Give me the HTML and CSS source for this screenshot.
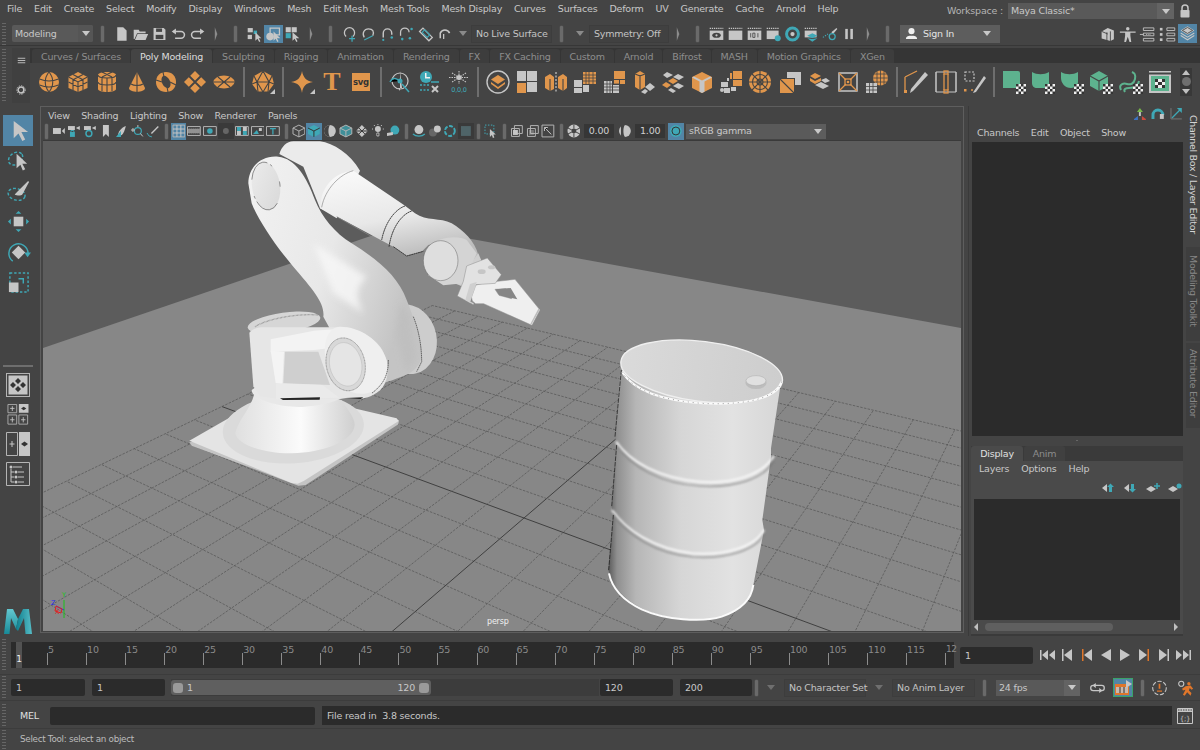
FILE: index.html
```html
<!DOCTYPE html>
<html lang="en">
<head>
<meta charset="utf-8">
<title>Maya</title>
<link rel="stylesheet" href="styles.css">
</head>
<body>
<div class="app">

<header class="menubar">
  <nav class="menus">
    <span>File</span><span>Edit</span><span>Create</span><span>Select</span><span>Modify</span><span>Display</span><span>Windows</span><span>Mesh</span><span>Edit Mesh</span><span>Mesh Tools</span><span>Mesh Display</span><span>Curves</span><span>Surfaces</span><span>Deform</span><span>UV</span><span>Generate</span><span>Cache</span><span>Arnold</span><span>Help</span>
  </nav>
  <div class="workspace">
    <span class="ws-label">Workspace :</span>
    <div class="ws-drop"><span>Maya Classic*</span><b class="caret-box"><i class="caret"></i></b></div>
    <svg class="lock" viewBox="0 0 12 14"><path class="sl" d="M3 6V4a3 3 0 0 1 6 0v2" fill="none" stroke-width="1.5"/><rect class="l" x="1.5" y="6" width="9" height="7.5" rx=".8"/></svg>
  </div>
</header>

<div class="statusline">
  <div class="grip"></div>
  <div class="mode-drop"><span>Modeling</span><b class="caret-box"><i class="caret"></i></b></div>
  <i class="hs"></i>
  <svg class="s" viewBox="0 0 20 20"><path class="l" d="M5 2h7l4 4v12H5z"/></svg>
  <svg class="s" viewBox="0 0 20 20"><path class="l" d="M2 5h6l1 2h7v2H6L3 16H2zM6.500 10H19l-3 7H3.500z"/></svg>
  <svg class="s" viewBox="0 0 20 20"><path class="l" d="M3 3h12l2 2v12H3z"/><rect class="d" x="6" y="3.500" width="7" height="4"/><rect class="d" x="5.500" y="11" width="9" height="5"/></svg>
  <svg class="s" viewBox="0 0 20 20"><path class="sl" fill="none" stroke-width="1.800" d="M4 7h9a4 4 0 0 1 0 8H6"/><path class="l" d="M7 3.500v7L2 7z"/></svg>
  <svg class="s" viewBox="0 0 20 20"><path class="sl" fill="none" stroke-width="1.800" d="M16 7H7a4 4 0 0 0 0 8h7"/><path class="l" d="M13 3.500v7L18 7z"/></svg>
  <svg class="s" viewBox="0 0 20 20"><path class="cl" d="M8 2l3 8-3 8z"/></svg>
  <i class="hs"></i>
  <svg class="s" viewBox="0 0 20 20"><rect class="l" x="2" y="3" width="6" height="5"/><rect class="l" x="2" y="11" width="5" height="5"/><rect class="t" x="9" y="6" width="4" height="4"/><path class="l" d="M11 8v10l2.500-2.500 2 4 1.500-1-2-3.500H18z"/></svg>
  <b class="sel-box"><svg class="s" viewBox="0 0 20 20"><path class="sl" fill="none" stroke-width="1.500" d="M6 9V3h11v8h-5"/><circle class="l" cx="6" cy="13" r="4.500"/><path class="l" d="M10 7v11l2.500-2.500 2 4 1.500-1-2-3.500H18z"/></svg></b>
  <svg class="s" viewBox="0 0 20 20"><rect class="l" x="2" y="2" width="6" height="6"/><rect class="l" x="9" y="2" width="6" height="6"/><rect class="t" x="2" y="9" width="6" height="6"/><path class="l" d="M10 8v10l2.500-2.500 2 4 1.500-1-2-3.500H18z"/></svg>
  <svg class="s" viewBox="0 0 20 20"><path class="cl" d="M8 2l3 8-3 8z"/></svg>
  <i class="hs"></i>
  <svg class="s" viewBox="0 0 20 20"><path class="sl" fill="none" stroke-width="1.500" d="M6 13a6 6 0 1 1 8 0"/><path class="st" stroke-width="1.500" d="M13 12v7M9.500 15.500h7"/></svg>
  <svg class="s" viewBox="0 0 20 20"><path class="sl" fill="none" stroke-width="1.500" d="M5 14c-3-5 0-10 5-10s7 3 5 8"/><path class="st" fill="none" stroke-width="1.300" d="M5 17l10-5"/></svg>
  <svg class="s" viewBox="0 0 20 20"><path class="sl" fill="none" stroke-width="1.700" d="M5 14V9a5 5 0 0 1 10 0v2"/><circle class="t" cx="15" cy="14" r="1.500"/><circle class="t" cx="5" cy="17" r="1.300"/></svg>
  <svg class="s" viewBox="0 0 20 20"><path class="sl" fill="none" stroke-width="1.500" d="M3 12V8a5 5 0 0 1 10 0"/><circle class="t" cx="16" cy="4" r="1.500"/><circle class="t" cx="5" cy="16" r="1.500"/><circle class="t" cx="14" cy="15" r="1.500"/></svg>
  <svg class="s" viewBox="0 0 20 20"><path class="sl" fill="none" stroke-width="1.500" d="M3 7l4-4 11 11-4 4z"/><path class="st" fill="none" stroke-width="1.300" d="M6 8l3-3 6 6-3 3z"/></svg>
  <svg class="s" viewBox="0 0 20 20"><path class="sl" fill="none" stroke-width="1.800" d="M5 15V9a6 6 0 0 1 11 0"/><path class="sl" fill="none" stroke-width="1.500" d="M9 16V10"/></svg>
  <span class="arrow-slot"><i class="caret dim"></i></span>
  <div class="field-flat w81">No Live Surface</div>
  <i class="hs"></i>
  <span class="arrow-slot a18"><i class="caret dim"></i></span>
  <div class="field-flat w80">Symmetry: Off</div>
  <svg class="s" viewBox="0 0 20 20"><path class="cl" d="M8 2l3 8-3 8z"/></svg>
  <i class="hs"></i>
  <svg class="s" viewBox="0 0 20 20"><rect class="l" x="2" y="6" width="16" height="11"/><path class="sl" stroke-width="1.500" stroke-dasharray="1.500 1" d="M2 3.500h16"/><ellipse class="d" cx="10" cy="11.500" rx="5" ry="3"/><circle class="l" cx="10" cy="11.500" r="1.300"/></svg>
  <svg class="s" viewBox="0 0 20 20"><rect class="l" x="2" y="6" width="16" height="11"/><path class="sl" stroke-width="1.500" stroke-dasharray="1.500 1" d="M2 3.500h16"/></svg>
  <svg class="s" viewBox="0 0 20 20"><rect class="l" x="2" y="6" width="16" height="11"/><path class="sl" stroke-width="1.500" stroke-dasharray="1.500 1" d="M2 3.500h16"/><path class="sd" d="M5.500 9v5M8 9v5h2.500V9zM14 9v5"/></svg>
  <svg class="s" viewBox="0 0 20 20"><rect class="l" x="2" y="6" width="14" height="10"/><path class="sl" stroke-width="1.500" stroke-dasharray="1.500 1" d="M2 3.500h14"/><circle class="t" cx="15" cy="15" r="3.500"/></svg>
  <svg class="s" viewBox="0 0 20 20"><circle class="st" fill="none" stroke-width="3.500" cx="10" cy="10" r="7"/><circle class="l" cx="10" cy="10" r="2.500"/></svg>
  <svg class="s" viewBox="0 0 20 20"><rect class="l" x="2" y="6" width="14" height="8"/><path class="sl" stroke-width="1.500" stroke-dasharray="1.500 1" d="M2 3.500h14"/><path class="t" d="M5 12l6-3 6 3-6 3z"/><path class="t" d="M5 15l6 1 6-1-6 4z"/></svg>
  <svg class="s" viewBox="0 0 20 20"><path class="l" d="M11 8l6-5 1 1-5 6z"/><circle class="st" fill="none" stroke-width="1.500" cx="12" cy="13" r="3.500"/><path class="st" stroke-width="1.300" stroke-dasharray="1.500 1.500" d="M1 14l6-4"/></svg>
  <svg class="s" viewBox="0 0 20 20"><rect class="l" x="5" y="4" width="3" height="12"/><rect class="l" x="11" y="4" width="3" height="12"/></svg>
  <svg class="s" viewBox="0 0 20 20"><path class="cl" d="M8 2l3 8-3 8z"/></svg>
  <i class="hs"></i>
  <div class="signin">
    <svg class="sign-ic" viewBox="0 0 14 14"><circle class="w" cx="7" cy="4.500" r="3.300"/><path class="w" d="M1 13c0-3 3-3.500 6-3.500s6 .5 6 3.500z"/></svg>
    <span>Sign In</span><i class="caret"></i>
  </div>
  <div class="sl-right">
    <svg class="s w19" viewBox="0 0 20 20"><path class="l" d="M3 7l7-4 7 3v10l-4 2-3-1-7-2z"/><path class="sd" d="M9 8v10M13 7v11M3 7l7 3"/></svg>
    <svg class="s w19" viewBox="0 0 20 20"><circle class="l" cx="10" cy="4" r="2"/><path class="l" d="M1 7h18v1.500h-6V12l1 7h-2l-2-6-2 6H6l1-7V8.500H1z"/></svg>
    <svg class="s w19" viewBox="0 0 20 20"><path class="sl" fill="none" d="M5 3h12v3H5zM5 9h12v3H5zM5 15h12v3H5zM1 10.500h4"/><path class="sl" stroke-dasharray="1 1" d="M8 10.500h6"/></svg>
    <svg class="s w19" viewBox="0 0 20 20"><path class="sl" fill="none" d="M9 3h9v3H9zM9 9h9v3H9zM9 15h9v3H9z"/><rect class="l" x="1" y="3" width="3" height="3"/><rect class="l" x="1" y="9" width="3" height="3"/><rect class="l" x="1" y="15" width="3" height="3"/></svg>
    <b class="sel-box tall"><svg class="s" viewBox="0 0 20 20"><path class="l" d="M10 2l8 5-8 5-8-5z"/><path class="sd" d="M10 3.500L16 7l-6 3.500L4 7z"/><path class="sl" fill="none" stroke-width="1.200" d="M2 10l8 5 8-5M2 13l8 5 8-5"/></svg></b>
  </div>
</div>

<section class="shelf-wrap">
  <div class="grip"></div>
  <div class="shelf">
    <div class="shelf-side">
      <svg class="side-ic" viewBox="0 0 12 12"><path class="sl" stroke-width="1.200" d="M1 3h10M1 6h10M1 9h10"/></svg>
      <svg class="side-ic" viewBox="0 0 12 12"><circle class="sl" fill="none" stroke-width="1.800" cx="6" cy="6" r="3.500"/><circle class="sl" fill="none" stroke-width="1" stroke-dasharray="1.500 1.500" cx="6" cy="6" r="5.200"/></svg>
    </div>
    <div class="shelf-main">
      <div class="tabs">
        <span class="tab">Curves / Surfaces</span><span class="tab on">Poly Modeling</span><span class="tab">Sculpting</span><span class="tab">Rigging</span><span class="tab">Animation</span><span class="tab">Rendering</span><span class="tab">FX</span><span class="tab">FX Caching</span><span class="tab">Custom</span><span class="tab">Arnold</span><span class="tab">Bifrost</span><span class="tab">MASH</span><span class="tab">Motion Graphics</span><span class="tab">XGen</span>
      </div>
      <div class="shelf-icons">
        <svg class="si" viewBox="0 0 24 24"><circle class="o" cx="12" cy="12" r="10"/><path class="cut" d="M2.500 9c6 2.500 13 2.500 19 0M2.500 15c6 2.500 13 2.500 19 0M12 2c-5 6-5 14 0 20M12 2c5 6 5 14 0 20"/></svg>
        <svg class="si" viewBox="0 0 24 24"><path class="o" d="M12 2l9.500 5v11L12 22l-9.500-4V7z"/><path class="cut" d="M2.500 7l9.500 5 9.500-5M12 12v10M7 4.500l9.500 5M17 4.500l-9.500 5M7 9.500V20M17 9.500V20M2.500 12l9.500 5 9.500-5"/></svg>
        <svg class="si" viewBox="0 0 24 24"><path class="o" d="M3 5c0-4 18-4 18 0v14c0 4-18 4-18 0z"/><path class="cut" d="M3 5c0 4 18 4 18 0M3 12c0 4 18 4 18 0M12 8v14M7 8v13M17 8v13M7 2l10 5M17 2L7 7"/></svg>
        <svg class="si" viewBox="0 0 24 24"><path class="o" d="M12 2l8 16c0 5-16 5-16 0z"/><path class="cut" d="M12 2v20M6 14c3 2 9 2 12 0"/></svg>
        <svg class="si" viewBox="0 0 24 24"><path class="o" d="M12 2c6 0 10 4 10 10s-4 10-10 10S2 18 2 12 6 2 12 2z"/><ellipse class="hole" cx="12" cy="12" rx="4" ry="6.500" transform="rotate(-25 12 12)"/><path class="cut" d="M2 10l6 2M16 12l6 3M9 2l1 5M14 22l-1-5"/></svg>
        <svg class="si" viewBox="0 0 24 24"><path class="o" d="M12 1l11 11-11 11L1 12z"/><path class="cut2" d="M6 6l12 12M18 6L6 18"/></svg>
        <svg class="si" viewBox="0 0 24 24"><ellipse class="o" cx="12" cy="12" rx="10.500" ry="6.500"/><path class="cut" d="M1.500 12h21M6 7l12 10M18 7L6 17"/></svg>
        <i class="vs"></i>
        <svg class="si" viewBox="0 0 24 24"><path class="o" d="M12 1l9 5 2 8-6 8H7l-6-8 2-8z"/><path class="cut" d="M12 1L6 12h12zM3 6l3 6-5 2M21 6l-3 6 5 2M6 12l1 10M18 12l-1 10M6 12l6 10 6-10M7 22h10"/><path class="l" d="M24 24h-5l5-5z"/></svg>
        <i class="vs"></i>
        <svg class="si" viewBox="0 0 24 24"><path class="o" d="M11 1c1 6 4 10 11 11-7 1-10 4-11 11-1-7-4-10-11-11 7-1 10-5 11-11z"/><path class="l" d="M24 24h-5l5-5z"/></svg>
        <span class="si-t">T</span>
        <span class="svg-badge">svg</span>
        <i class="vs"></i>
        <svg class="si" viewBox="0 0 24 24"><circle class="sl" fill="none" stroke-width="1.200" cx="12" cy="11" r="8"/><path class="l" d="M12 1v20l-2-3h4z"/><path class="st" stroke-width="1.500" d="M2 12c3-6 7-3 10-1M14 14l7 8"/><circle class="t" cx="12" cy="11" r="2.500"/></svg>
        <svg class="si" viewBox="0 0 24 24"><circle class="t" cx="9" cy="7" r="6"/><path class="w" d="M8 3h1.500v4H13v1.500H8z"/><path class="st" stroke-width="1.500" d="M14 12h8"/><path class="st" stroke-width="1.500" stroke-dasharray="2 1.500" d="M3 15h9M3 20h10"/><path class="sl" stroke-width="2" d="M15 16l6 6M21 16l-6 6"/></svg>
        <svg class="si" viewBox="0 0 24 24"><path class="sl" stroke-width="1.100" stroke-dasharray="1.500 1" d="M12 1v13M5 3l14 9M19 3L5 12M2 7.500h20"/><circle class="l" cx="12" cy="7.500" r="2.500"/><text class="zero" x="12" y="22">0,0,0</text></svg>
        <i class="vs"></i>
        <svg class="si" viewBox="0 0 24 24"><circle class="sl" fill="none" stroke-width="1.400" cx="12" cy="12" r="11"/><path class="o" d="M12 5l7 4.500-7 4.500-7-4.500z"/><path class="o" d="M5 12l7 5 7-5v2l-7 5-7-5z"/></svg>
        <svg class="si" viewBox="0 0 24 24"><rect class="l" x="2" y="1" width="9" height="10"/><rect class="l" x="12" y="1" width="10" height="10"/><rect class="l" x="12" y="12" width="10" height="10"/><rect class="o" x="2" y="13" width="9" height="10"/></svg>
        <svg class="si" viewBox="0 0 24 24"><path class="o" d="M1 7l5-3 4 3v12l-4 2-5-3zM14 7l5-3 4 3v11l-4 3-5-3z"/><path class="cut" d="M6 9v12M19 9v12"/><path class="sl" stroke-dasharray="2 1.500" stroke-width="1.200" d="M12 2v21"/></svg>
        <svg class="si" viewBox="0 0 24 24"><rect class="o" x="10" y="2" width="13" height="12"/><path class="cut1" d="M13 2v12M16 2v12M20 2v12M10 5h13M10 8h13M10 11h13"/><rect class="l" x="1" y="10" width="8" height="7"/><rect class="l" x="10" y="15" width="6" height="7"/><rect class="l" x="1" y="18" width="8" height="5"/></svg>
        <svg class="si" viewBox="0 0 24 24"><rect class="o" x="12" y="1" width="11" height="8"/><rect class="o" x="12" y="10" width="5" height="4"/><rect class="o" x="18" y="10" width="5" height="4"/><path class="l" d="M2 11h8v12H2zM11 15h6v8h-6z"/><path class="cut1" d="M5 11v12M8 11v12M2 14h15M2 17h15M2 20h15"/></svg>
        <svg class="si" viewBox="0 0 24 24"><path class="o" d="M3 4l5-3 5 3v13l-5 3-5-3z"/><path class="cut" d="M8 5v15M3 4l5 2 5-2"/><path class="l" d="M13 17l5-4 5 4-5 4zM9 22l4-3 3 2-3 3z"/></svg>
        <svg class="si" viewBox="0 0 24 24"><path class="l" d="M6 2l6 3-6 3-4-3z"/><path class="l" d="M17 4l6 3-5 3-6-3z"/><path class="o" d="M12 8l5 3-5 3-5-3z"/><path class="o" d="M5 12l5 3-4 3-5-3z"/><path class="l" d="M17 13l6 3-5 3-6-3z"/><path class="l" d="M10 18l5 3-3 2-5-3z"/></svg>
        <svg class="si" viewBox="0 0 24 24"><path class="o" d="M12 2l10 5v11l-10 5L2 18V7z"/><path class="l" d="M12 11v12l-2.500-1.300V11.500L2 7.500l2-1 8 4 8-4 2 1-7.500 4v10.200L12 23z"/></svg>
        <svg class="si" viewBox="0 0 24 24"><rect class="o" x="14" y="1" width="9" height="8"/><rect class="o" x="11" y="3" width="2" height="6"/><rect class="o" x="14" y="10" width="9" height="6"/><path class="l" d="M2 12h7v5H2zM8 8h2v3H8zM5 18h6v5H5zM12 17h5v4h-5z"/><circle class="l" cx="3" cy="20" r="2"/></svg>
        <svg class="si" viewBox="0 0 24 24"><circle class="o" cx="12" cy="12" r="11"/><circle class="cut" cx="12" cy="12" r="7.500"/><circle class="cut" cx="12" cy="12" r="3"/><path class="cut" d="M12 1v22M1 12h22M4 4l16 16M20 4L4 20"/></svg>
        <svg class="si" viewBox="0 0 24 24"><path class="o" d="M2 9h14v14H2z"/><path class="l" d="M9 2h14v13h-6V8H9z"/><path class="cut" d="M2 9l14 14"/></svg>
        <svg class="si" viewBox="0 0 24 24"><path class="o" d="M8 3l6 3-6 3-5-3z"/><path class="o" d="M3 8l5 3 6-3v3l-6 3-5-3z"/><path class="l" d="M8 15l6-3 8 4-6 3z"/><path class="l" d="M14 10l5-2 4 3-5 2z"/></svg>
        <svg class="si" viewBox="0 0 24 24"><path class="sl" fill="none" stroke-width="1.500" d="M3 3h18v18H3z"/><path class="so" d="M3 3l7 7M21 3l-7 7M3 21l7-7M21 21l-7-7" stroke-width="1.300"/><rect class="so" fill="none" stroke-width="1.300" x="9" y="9" width="6" height="6"/><circle class="o" cx="12" cy="12" r="1.300"/></svg>
        <svg class="si" viewBox="0 0 24 24"><circle class="o" cx="15.500" cy="8" r="7.500"/><path class="cut1" d="M8 8h15M9 4h13M9 12h13M15.500 0v16M12 1v14M19 1v14"/><path class="l" d="M1 13h11v10H1z"/><path class="cut1" d="M4.500 13v10M8 13v10M1 16.500h11M1 20h11"/></svg>
        <i class="vs"></i>
        <svg class="si" viewBox="0 0 24 24"><path class="so" fill="none" stroke-width="1.300" d="M1 7l12-6M1 7v14"/><rect class="o" x="0" y="20" width="3" height="3"/><path class="l" d="M9 21l-3 2 1-4L21 2l3 3z"/></svg>
        <svg class="si" viewBox="0 0 24 24"><path class="sl" fill="none" stroke-width="1.500" d="M2 2v20M22 2v20"/><path class="sl" fill="none" stroke-width="1.200" d="M2 2h20M2 22h20"/><rect class="so" fill="none" stroke-width="1.300" x="10" y="1" width="4" height="3"/><rect class="so" fill="none" stroke-width="1.300" x="10" y="20" width="4" height="3"/><path class="so" stroke-width="1.300" d="M10 4v16M14 4v16"/></svg>
        <svg class="si" viewBox="0 0 24 24"><path class="sl" fill="none" stroke-dasharray="2 1.500" stroke-width="1.200" d="M2 2h9v9H2z"/><rect class="o" x="1" y="19" width="2.500" height="2.500"/><circle class="o" cx="9" cy="20" r="1"/><path class="l" d="M11 21l-1 2 3-1L23 8l-2-2z"/></svg>
        <i class="vs"></i>
        <svg class="si" viewBox="0 0 24 24"><path class="g" d="M1 1h15a2 2 0 0 1 2 2v15H1z"/><use href="#chk"/></svg>
        <svg class="si" viewBox="0 0 24 24"><path class="g" d="M1 2c5 3 12 3 17 0v16H6c-3 0-5-2-5-5z"/><use href="#chk"/></svg>
        <svg class="si" viewBox="0 0 24 24"><path class="g" d="M1 2c5 3 12 3 17 0v10c0 3-3 6-7 6-6 0-10-5-10-10z"/><use href="#chk"/></svg>
        <svg class="si" viewBox="0 0 24 24"><path class="g" d="M10 1l9 5v10l-9 5-9-5V6z"/><path class="cut" d="M1 6l9 5 9-5M10 11v10"/><use href="#chk"/></svg>
        <svg class="si" viewBox="0 0 24 24"><path class="sg" fill="none" stroke-width="2" d="M2 20c-3-6 3-7 6-6s7 0 8-5-1-6-3-7"/><path class="sg" fill="none" stroke-width="2" d="M6 22c-2-3 1-4 4-4s9 0 10-7"/><use href="#chk"/></svg>
        <svg class="si" viewBox="0 0 24 24"><rect class="l" x="1" y="1" width="22" height="22"/><rect class="d" x="1" y="2.500" width="22" height="2"/><rect class="g" x="3" y="6" width="18" height="15"/><path class="k" d="M7 9h3v3H7zM14 9h3v3h-3zM10 12h4v3h-4zM7 15h3v3H7zM14 15h3v3h-3z"/><path class="w" d="M10 9h4v3h-4zM7 12h3v3H7zM14 12h3v3h-3zM10 15h4v3h-4z"/></svg>
        <div class="shelf-scroll"><i class="tri-up"></i><i class="dot"></i><i class="tri-down"></i></div>
      </div>
    </div>
  </div>
</section>

<main class="main">
  <aside class="toolbox">
    <b class="tool on"><svg viewBox="0 0 24 24"><path class="l" d="M7 2v18l5-5 4 8 3-1.500-4-8h7z"/></svg></b>
    <b class="tool"><svg viewBox="0 0 24 24"><ellipse class="st" fill="none" stroke-width="1.500" stroke-dasharray="3 2" cx="9" cy="10" rx="8" ry="6" transform="rotate(-35 9 10)"/><path class="l" d="M10 5v15l4-3.500 2.500 6 2.500-1.500-3-5.500h5z"/></svg></b>
    <b class="tool"><svg viewBox="0 0 24 24"><ellipse class="st" fill="none" stroke-width="1.500" stroke-dasharray="3 2" cx="10" cy="15" rx="9" ry="6" transform="rotate(15 10 15)"/><path class="l" d="M11 12L22 1l1 1-7 13c-2 2-6 1-8 0z"/></svg></b>
    <b class="tool"><svg viewBox="0 0 24 24"><rect class="l" x="7" y="7" width="10" height="10"/><path class="t" d="M12 1l3 3H9zM12 23l3-3H9zM1 12l3-3v6zM23 12l-3-3v6z"/></svg></b>
    <b class="tool"><svg viewBox="0 0 24 24"><path class="st" fill="none" stroke-width="1.500" d="M6 21a10 10 0 1 1 16-8"/><path class="t" d="M18 12h7l-3.500 5z"/><path class="l" d="M12 5l7 7-7 7-7-7z"/></svg></b>
    <b class="tool"><svg viewBox="0 0 24 24"><rect class="st" fill="none" stroke-width="1.500" stroke-dasharray="2.500 2" x="3" y="2" width="19" height="20"/><path class="st" fill="none" stroke-width="1.500" d="M12 8h5v5"/><rect class="l" x="2" y="12" width="10" height="10"/></svg></b>
    <hr class="tool-div">
    <svg class="lay one" viewBox="0 0 24 24"><rect class="frame" x=".5" y=".5" width="23" height="23"/><rect class="l" x="2.500" y="2.500" width="19" height="19"/><path class="k" d="M12 5l3 3-3 3-3-3zM7 9l3 3-3 3-3-3zM17 9l3 3-3 3-3-3zM12 13l3 3-3 3-3-3z"/></svg>
    <svg class="lay four" viewBox="0 0 24 24"><path class="frame" d="M.5.500h10v9.500H.500zM.5 12.500h10V23H.500zM13 12.500h10V23H13z"/><path class="sl" d="M5.500 2.500v5.500M3 5h5M5.500 15v6M3 18h5M18 15v6M15.500 18h5"/><rect class="l" x="13" y="0" width="11" height="10"/><path class="k" d="M18.500 3l3 2-3 2-3-2z"/></svg>
    <svg class="lay two" viewBox="0 0 24 24"><path class="frame" d="M.5.500h11v23H.500z"/><path class="sl" d="M6 9v6M3.500 12h5"/><rect class="l" x="13" y="0" width="11" height="24"/><path class="k" d="M18.500 9.500l3.500 2.500-3.500 2.500-3.500-2.500z"/></svg>
    <svg class="lay one" viewBox="0 0 24 24"><path class="frame" d="M.5.500h23v23H.500z"/><circle class="l" cx="5" cy="5" r="1.500"/><path class="sl" d="M7 5h9M5 7v13M5 10h3M5 15h3M5 20h3"/><circle class="l" cx="10" cy="10" r="1.500"/><circle class="l" cx="10" cy="15" r="1.500"/><circle class="l" cx="10" cy="20" r="1.500"/><path class="sl" d="M12 10h6M12 15h6M12 20h6"/></svg>
    <svg class="logo" viewBox="0 0 28 26">
      <defs>
        <linearGradient id="mg" x1="0" y1="0" x2="0" y2="1"><stop offset="0" stop-color="#63c7d0"/><stop offset="1" stop-color="#178a98"/></linearGradient>
        <linearGradient id="mg2" x1="0" y1="0" x2="1" y2="0"><stop offset="0" stop-color="#0e7f8e"/><stop offset="1" stop-color="#56bcc6"/></linearGradient>
      </defs>
      <path fill="url(#mg)" d="M0 26L3 1h6l5 10-2 10L7 10 5.500 26z"/>
      <path fill="url(#mg2)" d="M14 11l5-10h6l3 25h-6.500L20 10l-6 13-2-2z"/>
    </svg>
  </aside>

  <section class="viewport">
    <div class="vp-menu"><span>View</span><span>Shading</span><span>Lighting</span><span>Show</span><span>Renderer</span><span>Panels</span></div>
    <div class="vp-tools">
      <i class="hs small"></i>
      <svg class="v" viewBox="0 0 14 14"><rect class="l" x="1" y="4" width="8" height="6"/><path class="l" d="M10 7l3-3v6z"/></svg>
      <svg class="v" viewBox="0 0 14 14"><rect class="l" x="1" y="2" width="7" height="4"/><path class="l" d="M9 4l4-2v4z"/><rect class="t" x="3" y="8" width="5" height="5"/><path class="st" fill="none" d="M4 8V6.500h3V8"/></svg>
      <svg class="v" viewBox="0 0 14 14"><rect class="l" x="1" y="2" width="7" height="4"/><path class="l" d="M9 4l4-2v4z"/><circle class="st" fill="none" stroke-width="1.500" cx="6" cy="9.500" r="3"/></svg>
      <svg class="v" viewBox="0 0 14 14"><path class="l" d="M4 1h6v12l-3-3-3 3z"/></svg>
      <svg class="v" viewBox="0 0 14 14"><path class="l" d="M3 12c0-4 3-8 8-10-1 4-2 7-4 9z"/><path class="t" d="M1 13l5-6v6z"/></svg>
      <svg class="v" viewBox="0 0 14 14"><circle class="st" fill="none" stroke-width="1.200" cx="8" cy="7" r="3.500"/><path class="sl" d="M1 6h4M3 4v4M10.500 9.500l2.500 3M8 1v2"/></svg>
      <svg class="v" viewBox="0 0 14 14"><path class="l" d="M5 9l7-7 1 1-7 7z"/><path class="st" fill="none" d="M1 9l2 3 3 1"/></svg>
      <i class="hs small"></i>
      <b class="v-sel"><svg class="v" viewBox="0 0 14 14"><path class="frame" d="M1 1h12v12H1z"/><path class="sl" d="M1 5h12M1 9h12M5 1v12M9 1v12"/></svg></b>
      <svg class="v" viewBox="0 0 14 14"><path class="frame" d="M.5 2.500h13v9H.500z"/><rect class="l" x="1" y="4.500" width="12" height="5" fill-opacity=".6"/><path class="d" stroke="#444" stroke-dasharray="1 1" d="M1 4h12M1 10h12"/></svg>
      <svg class="v" viewBox="0 0 14 14"><path class="frame" d="M.5 2.500h13v9H.500z"/><circle class="t" cx="7" cy="7" r="2.800"/></svg>
      <b class="v-dark"><svg class="v" viewBox="0 0 14 14"><circle class="dimdot" cx="7" cy="7" r="3"/></svg></b>
      <svg class="v" viewBox="0 0 14 14"><path class="frame" d="M.5 2.500h13v9H.500z"/><path class="t" d="M2 3h4v4H2zM8 7h4v4H8z"/><path class="l" d="M8 3h4v4H8zM2 7h4v4H2z"/></svg>
      <svg class="v" viewBox="0 0 14 14"><path class="frame" d="M.5 2.500h13v9H.500z"/><path class="t" d="M2 10l4-4 2 4z"/><rect class="l" x="8" y="4" width="3" height="3"/></svg>
      <svg class="v" viewBox="0 0 14 14"><path class="frame" d="M.5 2.500h13v9H.500z"/><path class="st" fill="none" stroke-width="1.300" d="M4 4.500h6M7 4.500v6"/></svg>
      <i class="hs small"></i>
      <svg class="v" viewBox="0 0 14 14"><path class="frame" d="M7 1l6 3v6l-6 3-6-3V4zM1 4l6 3 6-3M7 7v6"/></svg>
      <b class="v-sel"><svg class="v" viewBox="0 0 14 14"><path class="t" d="M7 1l6 3v6l-6 3-6-3V4z"/><path class="fdark" d="M1 4l6 3 6-3M7 7v6"/></svg></b>
      <svg class="v" viewBox="0 0 14 14"><circle class="l" cx="7" cy="7" r="6"/><path class="d" d="M7 1a6 6 0 0 0 0 12c-2-3-2-9 0-12z"/></svg>
      <svg class="v" viewBox="0 0 14 14"><path class="t" d="M7 1l6 3v6l-6 3-6-3V4z" opacity=".75"/><path class="frame" d="M7 1l6 3v6l-6 3-6-3V4zM1 4l6 3 6-3M7 7v6"/></svg>
      <svg class="v" viewBox="0 0 14 14"><path class="l" d="M7 1l6 6-6 6-6-6z"/><path class="fdark" d="M4 4l6 6M10 4l-6 6M1 7h12"/></svg>
      <svg class="v" viewBox="0 0 14 14"><circle class="l" cx="7" cy="5" r="3"/><path class="sl" d="M7 0v1M2 5H1M13 5h-1M3 1l1 1M11 1l-1 1M6 9h2v3H6z"/></svg>
      <svg class="v" viewBox="0 0 14 14"><circle class="t" cx="9" cy="6" r="4.500"/><path class="l" d="M1 9l6-1v3l-6 1z"/></svg>
      <i class="hs small"></i>
      <svg class="v" viewBox="0 0 14 14"><circle class="l" cx="7" cy="5.500" r="4.500"/><path class="st" fill="none" stroke-width="1.300" d="M1 10c3 3 9 3 12 0"/></svg>
      <svg class="v" viewBox="0 0 14 14"><circle class="dimdot" cx="5" cy="8.500" r="4"/><circle class="l" cx="9.500" cy="5" r="3.500"/></svg>
      <svg class="v" viewBox="0 0 14 14"><circle class="st" fill="none" stroke-width="2" stroke-dasharray="4 1.500" cx="7" cy="7" r="5"/></svg>
      <b class="v-dark"><svg class="v" viewBox="0 0 14 14"><rect class="dimsq" x="2" y="2" width="10" height="10"/></svg></b>
      <i class="hs small"></i>
      <svg class="v" viewBox="0 0 14 14"><rect class="st" fill="none" stroke-dasharray="1.500 1.500" x="1" y="1" width="9" height="9"/><path class="l" d="M6 5v8l2-2 1 3 1.500-.5-1-3H12z"/></svg>
      <i class="hs small"></i>
      <svg class="v" viewBox="0 0 14 14"><path class="frame" d="M4.500 1.500h8v8h-8z"/><path class="frame" d="M1.500 4.500h8v8h-8z"/><rect class="l" x="3" y="6" width="5" height="5"/></svg>
      <svg class="v" viewBox="0 0 14 14"><path class="frame" d="M4.500 1.500h8v8h-8z"/><path class="frame" d="M1.500 4.500h8v8h-8z"/><rect class="l" x="3" y="6" width="5" height="5" opacity=".4"/></svg>
      <svg class="v" viewBox="0 0 14 14"><path class="frame" d="M1 1h12v12H1z"/><path class="sl" d="M3.500 3.500l7 7M7 3.500H3.500V7"/></svg>
      <i class="hs small"></i>
      <svg class="v" viewBox="0 0 14 14"><circle class="l" cx="7" cy="7" r="6.500"/><circle class="panel" cx="7" cy="7" r="2.500"/><path class="cut3" d="M7 .5v4M1 4l4 2M13 4L9 6M1 10l4-2M13 10l-4-2M7 13.500v-4"/></svg>
      <span class="vf w30">0.00</span>
      <svg class="v" viewBox="0 0 14 14"><circle class="l" cx="7" cy="7" r="6"/><path class="panel" d="M3 1h4c-2 2-2 10 0 12H3z"/></svg>
      <span class="vf w30">1.00</span>
      <b class="v-sel gam"><svg class="v" viewBox="0 0 14 14"><circle class="t" cx="7" cy="7" r="6"/><circle class="fdark" cx="7" cy="7" r="4"/></svg></b>
      <div class="gamma"><span>sRGB gamma</span><b class="caret-box"><i class="caret"></i></b></div>
    </div>
    <div class="canvas">
      <svg class="scene" viewBox="43 141 918 490" preserveAspectRatio="none">
        <defs>
          <linearGradient id="barrelG" x1="0" y1="0" x2="1" y2="0">
            <stop offset="0" stop-color="#5a5a5a"/><stop offset=".05" stop-color="#8f8f8f"/><stop offset=".16" stop-color="#b6b6b6"/><stop offset=".42" stop-color="#d6d6d6"/><stop offset=".72" stop-color="#e2e2e2"/><stop offset="1" stop-color="#d6d6d6"/>
          </linearGradient>
          <linearGradient id="topG" x1="0" y1="0" x2="1" y2="0"><stop offset="0" stop-color="#dadada"/><stop offset="1" stop-color="#cdcdcd"/></linearGradient>
          <linearGradient id="armG" x1="0" y1="0" x2="1" y2=".4"><stop offset="0" stop-color="#f2f2f2"/><stop offset=".55" stop-color="#e8e8e8"/><stop offset="1" stop-color="#c4c4c4"/></linearGradient>
          <linearGradient id="coneG" x1="0" y1="0" x2="1" y2="0"><stop offset="0" stop-color="#dfdfdf"/><stop offset=".55" stop-color="#fbfbfb"/><stop offset="1" stop-color="#cfcfcf"/></linearGradient>
          <linearGradient id="upG" x1="0" y1="0" x2=".3" y2="1"><stop offset="0" stop-color="#fbfbfb"/><stop offset=".6" stop-color="#e8e8e8"/><stop offset="1" stop-color="#bdbdbd"/></linearGradient>
          <linearGradient id="discG" x1="0" y1="0" x2="1" y2="1"><stop offset="0" stop-color="#ececec"/><stop offset="1" stop-color="#d8d8d8"/></linearGradient>
          <filter id="soft" x="-20%" y="-20%" width="140%" height="140%"><feGaussianBlur stdDeviation="9"/></filter>
          <filter id="softline" x="-5%" y="-20%" width="110%" height="140%"><feGaussianBlur stdDeviation="3"/></filter>
        </defs>
        <rect class="sky" x="43" y="141" width="918" height="490"/>
        <path class="ground" d="M43 348L400 226 961 328V631H43z"/>
        <g id="grid"></g>

        <g transform="translate(180 130) scale(.33333)">
          <!-- base -->
          <path fill="#c4c4c4" d="M28 937l7 10 320 120 22-2 278-182 2-12z"/>
          <path fill="#e4e4e4" d="M28 932L215 825H480L650 865l6 8-285 180-18 8-18-2z"/>
          <ellipse fill="#dadada" cx="340" cy="895" rx="212" ry="105" transform="rotate(-4 340 895)"/>
          <path fill="url(#coneG)" d="M222 795c-10 40-50 80-56 115 5 35 90 62 170 60 90-2 185-35 188-85 0-25-25-50-40-75z"/>
          <path fill="#e8e8e8" d="M215 780c0 30 90 55 160 50 60-4 120-20 115-40l-20-20H230z"/>
          <!-- rear upper arm -->
          <path fill="#ebebeb" d="M298 72C305 50 320 34 340 34H420C460 40 510 70 540 122L470 265l-50-30-50-125z"/>
          <path fill="url(#upG)" d="M425 200C440 150 480 125 520 122L672 225l33 25c35 25 75 12 110 30 35 20 70 55 80 95l-15 25-80-70-55 15-20 20-45 13-40-28-160-85-60-30z"/>
          <path fill="none" stroke="#8a8a8a" stroke-width="2" d="M520 122c-40 10-85 55-95 110M470 260l150 85"/>
          <path fill="none" stroke="#222" stroke-width="2.500" stroke-dasharray="6 1" d="M675 228c-30 10-60 50-70 102M695 243c-30 10-60 50-68 108M640 350l40 28 50-14"/>
          <!-- wrist -->
          <path fill="#cfcfcf" d="M895 370l12 28-50 75-30-12z"/>
          <!-- elbow disc -->
          <path fill="#d4d4d4" d="M745 350c30-30 90-35 115-20l30 40-40 90-60 6-45-30z"/>
          <ellipse fill="#dedede" stroke="#666" stroke-width="1.500" cx="782" cy="392" rx="52" ry="60"/>
          <!-- gripper -->
          <path fill="#efefef" stroke="#909090" stroke-width="1.500" d="M868 470l40-10 45-6 52-6 75 92-24 46-145-65-24 0-10-8zM945 478l12 18 38 10-18-30z"/>
          <path fill="#868686" d="M948 478l44-4 20 34-52-12z"/>
          <path fill="#bcbcbc" d="M1054 584l26-46-5-2-24 46z"/>
          <path fill="#e2e2e2" stroke="#8c8c8c" stroke-width="1.500" d="M860 408l62-24 42 50-18 26-58 4-18 50 12 6-2 4-48-26 18-44z"/>
          <path fill="#cfcfcf" d="M870 462l20-6-20 62-14-8z"/>
          <ellipse fill="#c6c6c6" cx="905" cy="425" rx="12" ry="7"/><ellipse fill="#c6c6c6" cx="935" cy="412" rx="11" ry="6"/>
          <!-- lower arm -->
          <ellipse fill="#cdcdcd" cx="685" cy="628" rx="85" ry="105" transform="rotate(-12 685 628)"/>
          <path fill="url(#armG)" d="M205 160c0-50 40-85 90-80 50 5 85 60 110 130 20 50 60 100 110 130 80 50 140 100 165 170 20 50 45 120 45 160 0 40-30 60-60 70-40 15-80 30-120 30L430 560c5-40-30-80-90-150-60-70-110-150-125-190z"/>
          <path fill="#f8f8f8" filter="url(#soft)" d="M400 340l160 100c-40 40-30 70-10 110l-90-60z" opacity=".8"/>
          <path fill="#bdbdbd" filter="url(#soft)" d="M660 520l30 40 20 120-30 50-30-110z" opacity=".7"/>
          <ellipse fill="url(#discG)" stroke="#333" stroke-width="1.500" stroke-dasharray="8 50 80 10" cx="258" cy="168" rx="42" ry="72" transform="rotate(-8 258 168)"/>
          <!-- shoulder -->
          <ellipse fill="#d6d6d6" cx="312" cy="578" rx="110" ry="30" transform="rotate(-8 312 578)"/>
          <path fill="none" stroke="#8f8f8f" stroke-width="4" stroke-dasharray="2 2" d="M225 590c40-25 130-40 190-35"/>
          <path fill="#e6e6e6" d="M208 608c10-12 25-16 40-16H478c40 0 100 20 130 70 20 40 20 80 0 110-20 25-50 35-80 35H300l-60-8-20-30z"/>
          <path fill="#f3f3f3" d="M272 628l130-26 70-5 60 25-60 30-70 8-130 5z"/>
          <path fill="#cfcfcf" d="M315 665h100l35 100-140-5z"/>
          <path fill="#f4f4f4" d="M272 662l40 3-5 98-20-4z"/>
          <path fill="#eaeaea" d="M288 760l140 5 50 38-190 5z"/>
          <path fill="#efefef" d="M480 590c60 0 120 40 140 100 10 50-10 90-60 100-50 10-100-30-120-90-15-50 0-110 40-110z"/>
          <ellipse fill="#d8d8d8" stroke="#555" stroke-width="1.600" stroke-dasharray="3 1.500" cx="497" cy="703" rx="58" ry="80" transform="rotate(-12 497 703)"/>
          <ellipse fill="#e5e5e5" stroke="#aaa" stroke-width="1" cx="497" cy="703" rx="48" ry="66" transform="rotate(-12 497 703)"/>
          <path fill="none" stroke="#333" stroke-width="2" stroke-dasharray="5 1.500" d="M700 560c20 50 25 100 25 135l-15 30M625 690c0 40-10 70-50 100"/>
          <path fill="#252525" d="M300 805l120-3-1 7-110 1zM480 805l70-3-8 5z"/>
        </g>

        <g transform="translate(590 330) scale(.33333)">
          <path fill="url(#barrelG)" d="M92 105L75 320l5 25L65 530l5 25L55 720c8 40 40 85 100 115 70 35 180 45 240 25 60-20 90-55 95-95l32-165-5-30 26-190 0-25 30-200z"/>
          <ellipse fill="url(#topG)" stroke="#efefef" stroke-width="4" cx="335" cy="124" rx="244" ry="90" transform="rotate(7 335 124)"/>
          <path fill="none" stroke="#fafafa" stroke-width="6" d="M95 125c40 60 120 85 240 95 100 5 220-5 240-65"/>
          <path fill="none" stroke="#444" stroke-width="1.500" stroke-dasharray="3 12" d="M95 125c40 60 120 85 240 95 100 5 220-5 240-65"/>
          <path fill="none" stroke="#f8f8f8" stroke-width="6" filter="url(#softline)" d="M78 335c40 60 130 110 250 120 100 8 190-20 224-78"/>
          <path fill="none" stroke="#6f6f6f" stroke-width="5" opacity=".55" filter="url(#softline)" d="M82 348c40 60 130 115 250 120 100 6 190-20 218-75"/>
          <path fill="none" stroke="#f8f8f8" stroke-width="6" filter="url(#softline)" d="M66 540c40 60 125 115 240 130 100 8 190-20 216-70"/>
          <path fill="none" stroke="#6f6f6f" stroke-width="5" opacity=".55" filter="url(#softline)" d="M70 553c40 60 125 118 240 128 100 6 190-20 212-70"/>
          <path fill="none" stroke="#fafafa" stroke-width="6" d="M57 730c8 40 40 80 98 108 70 32 180 40 240 22 60-20 90-55 95-95"/>
          <path fill="none" stroke="#111" stroke-width="2" stroke-dasharray="14 3" d="M94 120L75 320M80 345L65 530M70 555L56 720"/>
          <ellipse fill="#bdbdbd" cx="498" cy="158" rx="32" ry="19"/>
          <ellipse fill="#e0e0e0" stroke="#999" cx="498" cy="152" rx="30" ry="15"/>
        </g>

        <g class="axis">
          <path stroke="#18c418" d="M64 600v18"/>
          <path stroke="#3030e0" d="M64 610l-8-4"/>
          <path stroke="#e02020" d="M56 606l6 3-1 4-6-2z"/>
          <text x="62" y="597" fill="#18c418">Y</text>
          <text x="51" y="605" fill="#2828ee">Z</text>
          <text x="55" y="614" fill="#e02020">X</text>
        </g>
        <text class="persp" x="487" y="624">persp</text>
      </svg>
    </div>
  </section>

  <aside class="rightcol">
    <div class="cb-head">
      <div class="cb-icons">
        <svg class="v" viewBox="0 0 14 14"><path class="c-g" d="M7 1l3 4H4z"/><rect class="l" x="6" y="5" width="2" height="4"/><path class="c-b" d="M1 12l4-3v4H1z"/><path class="c-r" d="M9 9l4 3v1H9z"/></svg>
        <svg class="v" viewBox="0 0 14 14"><path class="st" fill="none" stroke-width="3" d="M2 12V8a5 5 0 0 1 10 0"/><rect class="l" x="9" y="7" width="4" height="5"/></svg>
        <svg class="v" viewBox="0 0 14 14"><path class="fm" d="M2 1v11h11"/><path class="st" stroke-width="1.300" d="M3 11l8-8"/><path class="t" d="M8 1h5v5z"/></svg>
      </div>
      <div class="cb-menu"><span>Channels</span><span>Edit</span><span>Object</span><span>Show</span></div>
    </div>
    <div class="cb-body"></div>
    <div class="pane-grip"></div>
    <div class="le-tabs"><span class="le-tab on">Display</span><span class="le-tab">Anim</span></div>
    <div class="le-panel">
      <div class="le-menu"><span>Layers</span><span>Options</span><span>Help</span></div>
      <div class="le-icons">
        <svg class="le" viewBox="0 0 14 10"><path class="l" d="M0 5l5-4v8z"/><path class="t" d="M7 9V4H5l3.500-3.500L12 4h-2v5z"/></svg>
        <svg class="le" viewBox="0 0 14 10"><path class="l" d="M0 5l5-4v8z"/><path class="t" d="M7 1v5H5l3.500 3.500L12 6h-2V1z"/></svg>
        <svg class="le" viewBox="0 0 14 10"><path class="l" d="M0 6l5-3 5 3-5 3z"/><path class="st" stroke-width="1.500" d="M11 0v6M8 3h6"/></svg>
        <svg class="le" viewBox="0 0 14 10"><path class="l" d="M0 6l5-3 5 3-5 3z"/><circle class="t" cx="11" cy="3" r="2.500"/></svg>
      </div>
      <div class="le-body"></div>
      <div class="le-scroll"><i class="tri-l"></i><i class="thumb"></i><i class="tri-r"></i></div>
    </div>
  </aside>

  <aside class="sidetabs">
    <span class="vt on h119">Channel Box / Layer Editor</span>
    <span class="vt h96">Modeling Toolkit</span>
    <span class="vt h90">Attribute Editor</span>
  </aside>
</main>

<section class="timerow">
  <div class="grip"></div>
  <div class="timeline">
    <i class="cursor">1</i>
    <div class="ticks">
      <span>5</span><span>10</span><span>15</span><span>20</span><span>25</span><span>30</span><span>35</span><span>40</span><span>45</span><span>50</span><span>55</span><span>60</span><span>65</span><span>70</span><span>75</span><span>80</span><span>85</span><span>90</span><span>95</span><span>100</span><span>105</span><span>110</span><span>115</span><span class="cut-tick">12</span>
    </div>
  </div>
  <div class="dfield w73 ml6">1</div>
  <div class="transport">
    <svg class="tp" viewBox="0 0 16 12"><rect class="l" x="0" y="1" width="1.500" height="10"/><path class="l" d="M8 1v10L2 6zM15 1v10L9 6z"/></svg>
    <svg class="tp" viewBox="0 0 16 12"><rect class="l" x="3" y="0" width="1.500" height="12"/><path class="l" d="M13 0v12L5 6z"/></svg>
    <svg class="tp" viewBox="0 0 16 12"><rect class="or" x="3" y="0" width="1.500" height="12"/><path class="l" d="M13 0v12L5 6z"/></svg>
    <svg class="tp" viewBox="0 0 16 12"><path class="l" d="M13 0v12L3 6z"/></svg>
    <svg class="tp" viewBox="0 0 16 12"><path class="l" d="M3 0v12l10-6z"/></svg>
    <svg class="tp" viewBox="0 0 16 12"><path class="l" d="M3 0v12l8-6z"/><rect class="or" x="11.500" y="0" width="1.500" height="12"/></svg>
    <svg class="tp" viewBox="0 0 16 12"><path class="l" d="M3 0v12l8-6z"/><rect class="l" x="11.500" y="0" width="1.500" height="12"/></svg>
    <svg class="tp" viewBox="0 0 16 12"><path class="l" d="M1 1v10l6-5zM8 1v10l6-5z"/><rect class="l" x="14.500" y="1" width="1.500" height="10"/></svg>
  </div>
</section>

<section class="rangerow">
  <div class="grip"></div>
  <div class="dfield w74 ml2">1</div>
  <div class="dfield w73 ml7">1</div>
  <div class="range-track">
    <div class="range">
      <i class="knob"></i><span class="r1">1</span><span class="r2">120</span><i class="knob"></i>
    </div>
  </div>
  <div class="dfield w73 ml1">120</div>
  <div class="dfield w72 ml7">200</div>
  <i class="hs hs-tight"></i>
  <span class="arrow-slot a26"><i class="caret dim hollow"></i></span>
  <div class="field-flat w82">No Character Set</div>
  <span class="arrow-slot a26"><i class="caret dim hollow"></i></span>
  <div class="field-flat w83">No Anim Layer</div>
  <i class="hs"></i>
  <div class="fps"><span>24 fps</span><b class="caret-box"><i class="caret"></i></b></div>
  <svg class="s ml8" viewBox="0 0 20 20"><path class="sl" fill="none" stroke-width="1.500" d="M5 7h10a3 3 0 0 1 0 6H5a3 3 0 0 1 0-6z"/><path class="l" d="M8 4v6L4 7zM12 10v6l4-3z"/></svg>
  <b class="loop-sel"><svg class="v big" viewBox="0 0 18 16"><rect class="or" x="1" y="4" width="14" height="11"/><path class="l" d="M2 7h12v6H2z" fill-opacity=".85"/><path class="fdark" d="M6 7v6M10 7v6"/><path class="l" d="M12 0l6 4-6 4z"/></svg></b>
  <i class="hs nm2"></i>
  <svg class="s" viewBox="0 0 20 20"><circle class="sl" fill="none" stroke-width="1.300" stroke-dasharray="5 2" cx="10" cy="10" r="8"/><path class="or" d="M9 5h2v6H9zM7 13h6v1.500H7z"/></svg>
  <svg class="s ml7" viewBox="0 0 20 20"><circle class="sl" fill="none" stroke-width="1.300" cx="5" cy="5" r="3"/><circle class="or" cx="14" cy="5" r="2"/><path class="or" d="M10 8l6-1 3 4-2 1-2-2-1 3 3 3-1 3-4-4-3 4-2-1 3-6-3 1-1-2z"/></svg>
</section>

<section class="melrow">
  <div class="grip"></div>
  <span class="mel">MEL</span>
  <div class="mel-in"></div>
  <i class="mel-dots"></i>
  <div class="mel-out">File read in&nbsp; 3.8 seconds.</div>
  <svg class="mel-ic" viewBox="0 0 16 16"><rect class="l" x="0" y="0" width="16" height="16" rx="1"/><rect class="panel" x="1" y="4" width="14" height="11"/><path class="sd" stroke-dasharray="1.500 1" d="M1 2h14"/><text class="cur" x="8" y="12.500">{;}</text></svg>
</section>

<footer class="helpline">
  <div class="grip"></div>
  <span>Select Tool: select an object</span>
</footer>

<svg class="hidden-defs" width="0" height="0"><defs><g id="chk"><rect class="w" x="14" y="14" width="10" height="10"/><path class="k" d="M14 14h2.500v2.500H14zM19 14h2.500v2.500H19zM16.500 16.500H19V19h-2.500zM21.500 16.500H24V19h-2.500zM14 19h2.500v2.500H14zM19 19h2.500v2.500H19zM16.500 21.500H19V24h-2.500zM21.500 21.500H24V24h-2.500z"/></g></defs></svg>
</div>
<script src="script.js"></script>
</body>
</html>
```

FILE: styles.css
```css
* { box-sizing: border-box; }
html, body { margin: 0; padding: 0; background: #444; }
body { width: 1200px; height: 750px; overflow: hidden; font: 9.5px/1 "DejaVu Sans", sans-serif; letter-spacing: -.2px; color: #c8c8c8; }
i, b { display: block; font-style: normal; font-weight: normal; }
.app { width: 1200px; height: 750px; display: flex; flex-direction: column; position: relative; }
.hidden-defs { position: absolute; }

/* svg palette */
.l { fill: #c6c6c6; } .d { fill: #444; } .w { fill: #f0f0f0; } .k { fill: #333; }
.t { fill: #3fa8b6; } .o { fill: #e0964c; } .g { fill: #5db28e; } .panel { fill: #444; }
.or { fill: #e0762a; } .cl { fill: #8c8c8c; } .dimdot { fill: #666; } .dimsq { fill: #4f6468; }
.c-g { fill: #78b84a; } .c-b { fill: #3d72c4; } .c-r { fill: #cc4b3e; }
.sl { stroke: #c6c6c6; } .sm { stroke: #8c8c8c; } .sd { stroke: #444; fill: none; }
.st { stroke: #3fa8b6; } .so { stroke: #e0964c; } .sg { stroke: #5db28e; }
.fm { fill: none; stroke: #777; }
.cut { stroke: #444; stroke-width: 1.100; fill: none; }
.cut1 { stroke: #444; stroke-width: .8; fill: none; }
.cut2 { stroke: #444; stroke-width: 1.800; fill: none; }
.cut3 { stroke: #444; stroke-width: 1; fill: none; }
.hole { fill: #444; }
.frame { fill: none; stroke: #b4b4b4; stroke-width: 1; }
.fdark { fill: none; stroke: #333; stroke-width: 1; }
.zero { font: 6.500px "DejaVu Sans", sans-serif; fill: #3fa8b6; text-anchor: middle; }
.cur { font: 7px "DejaVu Sans", sans-serif; fill: #c6c6c6; text-anchor: middle; }

/* shared bits */
.grip { width: 4px; margin: 0 3px 0 2px; align-self: stretch; flex: none;
  background: radial-gradient(circle, #666 .7px, transparent 1px) 0 0 / 2px 3px; }
.hs { width: 3px; height: 16px; margin: 0 8.500px 0 7.500px; background: #6a6a6a; border-radius: 1px; flex: none;
  box-shadow: 0 0 0 .5px #555; }
.hs.small { margin: 0 3px 0 3.500px; height: 15px; }
.caret { width: 0; height: 0; border: 4px solid transparent; border-top: 5px solid #c8c8c8; border-bottom: 0; }
.caret.dim { border-top-color: #8a8a8a; }
.caret.hollow { border-top-color: #6f6f6f; }
.caret-box { display: flex; align-items: center; justify-content: center; width: 16px; align-self: stretch; background: #5d5d5d; margin-left: auto; }
.s { width: 19px; height: 18px; flex: none; padding: 0 1px; }
.arrow-slot { width: 17px; display: flex; justify-content: center; flex: none; }
.a18 { width: 18px; } .a26 { width: 26px; }
.field-flat { height: 18px; display: flex; align-items: center; padding-left: 4px; border: 1px solid #3d3d3d; background: #414141; color: #c4c4c4; flex: none; white-space: nowrap; }
.w81 { width: 81px; } .w80 { width: 80px; } .w82 { width: 82px; } .w83 { width: 83px; }

/* menu bar */
.menubar { height: 22px; display: flex; justify-content: space-between; flex: none; }
.menus { display: flex; padding: 4px 0 0 7px; color: #c8c8c8; gap: 12px; height: 15px; white-space: nowrap; }
.workspace { display: flex; align-items: center; padding: 1px 0 0 0; height: 21px; }
.ws-label { margin-right: 5px; color: #b4b4b4; }
.ws-drop { width: 166px; height: 16px; background: #595959; display: flex; align-items: center; padding-left: 3px; color: #c8c8c8; white-space: nowrap; }
.ws-drop .caret-box { width: 17px; background: #636363; }
.lock { width: 12px; height: 14px; margin: 0 9px 0 5px; }

/* status line */
.statusline { height: 24px; display: flex; align-items: center; flex: none; border-bottom: 1px solid #373737; }
.mode-drop { width: 81px; height: 17px; background: #595959; display: flex; align-items: center; padding-left: 3px; margin-left: 3px; color: #c8c8c8; border-radius: 2px; overflow: hidden; }
.mode-drop .caret-box { width: 15px; background: #555; }
.sel-box { width: 19px; height: 18px; background: #5285a6; flex: none; }
.sel-box.tall { height: 19px; width: 19px; margin-left: 0; }
.signin { width: 100px; height: 18px; margin-left: 3px; background: #5d5d5d; display: flex; align-items: center; padding: 0 9px 0 5px; gap: 5px; color: #e4e4e4; flex: none; }
.signin .caret { margin-left: auto; }
.sign-ic { width: 13px; height: 13px; }
.sl-right { display: flex; margin-left: auto; align-items: center; padding-right: 3px; gap: .5px; }
.sl-right .s.w19 { width: 19.500px; }

/* shelf */
.shelf-wrap { height: 55px; margin-top: 2px; display: flex; flex: none; }
.shelf { flex: 1; display: flex; margin-left: 3px; background: #3b3b3b; min-width: 0; }
.shelf-side { width: 18px; background: #404040; display: flex; flex-direction: column; align-items: center; justify-content: space-between; padding: 8px 0 8px; flex: none; }
.side-ic { width: 9px; height: 9px; }
.shelf-side .side-ic:last-child { width: 10px; height: 10px; }
.shelf-main { flex: 1; display: flex; flex-direction: column; min-width: 0; }
.tabs { height: 15px; padding: 1px 0 0 2px; display: flex; gap: 1px; background: #353535; white-space: nowrap; }
.tab { padding: 3px 9px 0; background: #3d3d3d; color: #8e8e8e; border-radius: 3px 3px 0 0; }
.tab.on { background: #444; color: #ddd; }
.shelf-icons { flex: 1; background: #444; display: flex; align-items: center; padding: 0 0 3px 4.500px; }
.si { width: 24px; height: 24px; margin: 0 2.600px; flex: none; overflow: visible; }
.si-t { display: flex; width: 24px; height: 24px; margin: 0 2.600px; flex: none; align-items: center; justify-content: center; font: 700 26px/24px "Liberation Serif", serif; color: #e0964c; }
.svg-badge { width: 18px; height: 18px; margin: 0 5.600px; flex: none; background: #e0964c; color: #333; font: 700 8.500px/18px "DejaVu Sans", sans-serif; text-align: center; }
.vs { width: 2px; height: 30px; margin: 0 4px; background: #6e6e6e; flex: none; }
.shelf-scroll { width: 12px; height: 28px; margin-left: 6px; background: #383838; display: flex; flex-direction: column; align-items: center; justify-content: space-between; padding: 2px 0; flex: none; }
.tri-up { width: 0; height: 0; border: 4px solid transparent; border-top: 0; border-bottom: 5px solid #c0c0c0; }
.tri-down { width: 0; height: 0; border: 4px solid transparent; border-bottom: 0; border-top: 5px solid #c0c0c0; }
.dot { width: 9px; height: 9px; border-radius: 50%; background: #6e6e6e; }

/* main area */
.main { height: 530px; margin-top: 3px; display: flex; flex: none; }
.toolbox { width: 40px; padding: 9px 0 0 3px; display: flex; flex-direction: column; flex: none; }
.tool { width: 30px; height: 30.500px; display: flex; align-items: center; justify-content: center; flex: none; }
.tool svg { width: 23px; height: 23px; overflow: visible; }
.tool.on { background: #5285a6; }
.tool-div { width: 30px; height: 2px; margin: 67px 0 6px; background: #6e6e6e; border: 0; flex: none; }
.lay { display: block; flex: none; margin-left: 3px; }
.lay.one { width: 24px; height: 24px; }
.lay.four { width: 24px; height: 21px; margin-top: 7px; }
.lay.two { width: 24px; height: 24px; margin-top: 7px; }
.lay.two + .lay.one { margin-top: 6px; }
.logo { width: 28px; height: 26px; margin: auto 0 2px 1px; flex: none; }

.viewport { width: 924px; height: 527px; flex: none; border: 1px solid #5e5e5e; display: flex; flex-direction: column; }
.vp-menu { height: 15px; display: flex; padding: 4px 0 0 7px; gap: 11.500px; white-space: nowrap; flex: none; }
.vp-tools { height: 18px; display: flex; align-items: center; padding-left: 0; flex: none; white-space: nowrap; }
.v { width: 15.800px; height: 14px; flex: none; padding: 0 1px; display: block; }
.v.big { width: 18px; height: 16px; padding: 0; }
.v-sel { width: 15.800px; height: 17px; background: #5285a6; display: flex; align-items: center; flex: none; }
.v-dark { width: 15.800px; height: 16px; background: #3a3a3a; display: flex; align-items: center; flex: none; }
.vf { height: 14px; background: #363636; color: #d0d0d0; display: flex; align-items: center; justify-content: center; margin: 0 3px 0 2.500px; flex: none; }
.w30 { width: 30px; }
.gam { margin-right: 2px; }
.gamma { width: 140px; height: 15px; background: #5a5a5a; display: flex; align-items: center; padding-left: 3px; flex: none; }
.canvas { flex: 1; margin: 0 2px 1px 2px; min-height: 0; border-top: 1px solid #3a3a3a; }
.scene { display: block; width: 100%; height: 100%; }
.sky { fill: #5c5c5c; }
.ground { fill: #878787; }
#grid line { stroke: #575757; stroke-width: .75; stroke-dasharray: 2.500 1.300; }
#grid line.major { stroke: #404040; stroke-width: 1; stroke-dasharray: none; }
.axis path { stroke-width: 1; fill: none; }
.axis text { font: 6.500px "DejaVu Sans", sans-serif; }
.persp { font: 8px "DejaVu Sans", sans-serif; fill: #f0f0f0; }

/* right column */
.rightcol { width: 217px; margin-left: 4px; display: flex; flex-direction: column; flex: none; border-left: 1px solid #3a3a3a; }
.cb-head { height: 36px; display: flex; flex-direction: column; flex: none; }
.cb-icons { display: flex; justify-content: flex-end; gap: 2.500px; padding: 1px 1px 0 0; height: 18px; }
.cb-menu { display: flex; padding: 4px 0 0 8px; gap: 11.500px; white-space: nowrap; }
.cb-body { height: 294px; margin: 0 2px 0 3px; background: #2b2b2b; flex: none; }
.pane-grip { height: 9px; background: radial-gradient(circle, #666 .6px, transparent .9px) center / 2px 2px no-repeat; background-size: 72px 1px; flex: none; }
.le-tabs { height: 15px; display: flex; background: #3a3a3a; margin: 1px 2px 0; gap: 1px; flex: none; }
.le-tab { padding: 3px 10px 0; color: #8c8c8c; background: #404040; width: 41px; display: flex; justify-content: center; border-radius: 3px 3px 0 0; }
.le-tab.on { background: #4a4a4a; color: #e0e0e0; width: 52px; }
.le-panel { flex: 1; margin: 0 2px; background: #4a4a4a; display: flex; flex-direction: column; min-height: 0; border-bottom: 2px solid #3a3a3a; }
.le-menu { height: 17px; display: flex; padding: 3px 0 0 8px; gap: 12px; flex: none; }
.le-icons { height: 21px; display: flex; padding: 5px 1px 0 0; justify-content: flex-end; gap: 8px; flex: none; }
.le { width: 14px; height: 10px; }
.le-body { flex: 1; margin: 0 3px; background: #2b2b2b; }
.le-scroll { height: 14px; display: flex; align-items: center; margin: 0 3px; flex: none; }
.tri-l { border: 4px solid transparent; border-left: 0; border-right: 4px solid #c0c0c0; }
.tri-r { border: 4px solid transparent; border-right: 0; border-left: 4px solid #c0c0c0; margin-left: auto; margin-right: 2px; }
.thumb { width: 128px; height: 8px; background: #5f5f5f; border-radius: 4px; margin-left: 7px; }

.sidetabs { width: 14px; margin-left: 1px; padding-top: 6px; display: flex; flex-direction: column; gap: 2px; flex: none; }
.vt { writing-mode: vertical-rl; color: #878787; background: #3e3e3e; display: block; white-space: nowrap; line-height: 13px; font-size: 9.500px; letter-spacing: -.3px; }
.vt.on { color: #d4d4d4; background: #444; }
.h119 { height: 133px; padding-top: 3px; } .h96 { height: 94px; padding-top: 8px; } .h90 { height: 85px; padding-top: 6px; }

/* time */
.timerow { height: 34px; margin-top: 2px; display: flex; align-items: center; flex: none; }
.timeline { width: 943px; height: 26px; margin-left: 2px; background: #2b2b2b; position: relative; flex: none; }
.cursor { width: 6px; height: 26px; background: #525252; margin-left: 5px; color: #eee; padding-top: 13px; font-size: 9px; text-align: center; position: absolute; }
.ticks { display: flex; padding-left: 36px; height: 26px; white-space: nowrap; }
.ticks span { width: 39.060px; flex: none; color: #8a8a8a; padding: 2.500px 0 0 1px; position: relative; }
.ticks span::after { content: ""; position: absolute; left: 0; top: 11px; height: 12px; width: 1px; background: #8c8c8c; }
.ticks .cut-tick { font-size: 9px; letter-spacing: -.5px; width: 10px; }
.dfield { height: 17px; background: #2b2b2b; border-radius: 2px; padding: 4px 0 0 5px; color: #c8c8c8; flex: none; }
.w72 { width: 72px; } .w73 { width: 73px; } .w74 { width: 74px; }
.ml1 { margin-left: 1px; } .ml2 { margin-left: 2px; } .ml6 { margin-left: 6px; } .ml7 { margin-left: 7px; } .ml8 { margin-left: 8px; }
.transport { display: flex; margin-left: 7px; gap: 3.300px; align-items: center; }
.tp { width: 16px; height: 12px; flex: none; }

.rangerow { height: 27px; margin-top: 2px; display: flex; align-items: center; flex: none; border-top: 1px solid #3c3c3c; border-bottom: 1px solid #3c3c3c; }
.range-track { width: 428px; height: 17px; margin-left: 6px; background: #3c3c3c; display: flex; flex: none; }
.range { width: 260px; height: 15px; margin-top: 1px; background: #5f5f5f; border-radius: 3px; display: flex; align-items: center; padding: 0 2px; color: #c8c8c8; }
.knob { width: 10px; height: 10px; background: #9a9a9a; border-radius: 3px; }
.r1 { margin-left: 4px; } .r2 { margin-left: auto; margin-right: 4px; }
.hs.hs-tight { margin: 0 0 0 3px; }
.fps { width: 84px; height: 16px; margin-left: 2px; background: #595959; display: flex; align-items: center; padding-left: 3px; flex: none; }
.fps .caret-box { width: 16px; background: #636363; }
.loop-sel { width: 20px; height: 19px; margin-left: 6px; background: #5285a6; border: 1px solid #3aa36a; display: flex; align-items: center; justify-content: center; flex: none; }
.hs.nm2 { margin: 0 6px 0 8px; }

.melrow { height: 26px; margin-top: 2px; display: flex; align-items: center; flex: none; border-bottom: 1px solid #3c3c3c; }
.mel { width: 41px; padding-left: 11px; color: #e0e0e0; flex: none; }
.mel-in { width: 265px; height: 18px; background: #2b2b2b; border-radius: 2px; flex: none; }
.mel-dots { width: 7px; }
.mel-out { width: 850px; height: 19px; background: #2b2b2b; padding: 5px 0 0 5px; color: #c8c8c8; flex: none; }
.mel-ic { width: 16px; height: 16px; margin-left: 5px; flex: none; }

.helpline { flex: 1; display: flex; align-items: center; padding-bottom: 1px; color: #bcbcbc; }
.helpline span { margin-left: 11px; font-size: 8.800px; letter-spacing: -.3px; }
```

FILE: script.js
```js
// Draws the perspective floor grid from its two vanishing points.
(function () {
  var VA = [-926, -17], VB = [1198, -62], O = [524, 518];
  var KA = 38, KB = 28.8, N = 10, NS = "http://www.w3.org/2000/svg";
  var g = document.getElementById("grid");
  function along(V, k, t) {
    var f = t / (t + k);
    return [O[0] + (V[0] - O[0]) * f, O[1] + (V[1] - O[1]) * f];
  }
  function meet(a, b, c, d) {
    var x1 = a[0], y1 = a[1], x2 = b[0], y2 = b[1], x3 = c[0], y3 = c[1], x4 = d[0], y4 = d[1];
    var den = (x1 - x2) * (y3 - y4) - (y1 - y2) * (x3 - x4);
    var p = x1 * y2 - y1 * x2, q = x3 * y4 - y3 * x4;
    return [(p * (x3 - x4) - (x1 - x2) * q) / den, (p * (y3 - y4) - (y1 - y2) * q) / den];
  }
  function add(a, b, major) {
    var l = document.createElementNS(NS, "line");
    l.setAttribute("x1", a[0]); l.setAttribute("y1", a[1]);
    l.setAttribute("x2", b[0]); l.setAttribute("y2", b[1]);
    if (major) l.setAttribute("class", "major");
    g.appendChild(l);
  }
  for (var i = -N; i <= N; i++) {
    var pb = along(VB, KB, i), pa = along(VA, KA, i);
    var ba0 = along(VA, KA, -N), ba1 = along(VA, KA, N);
    var bb0 = along(VB, KB, -N), bb1 = along(VB, KB, N);
    add(meet(VA, pb, VB, ba0), meet(VA, pb, VB, ba1), i === 0);
    add(meet(VB, pa, VA, bb0), meet(VB, pa, VA, bb1), i === 0);
  }
})();
```
